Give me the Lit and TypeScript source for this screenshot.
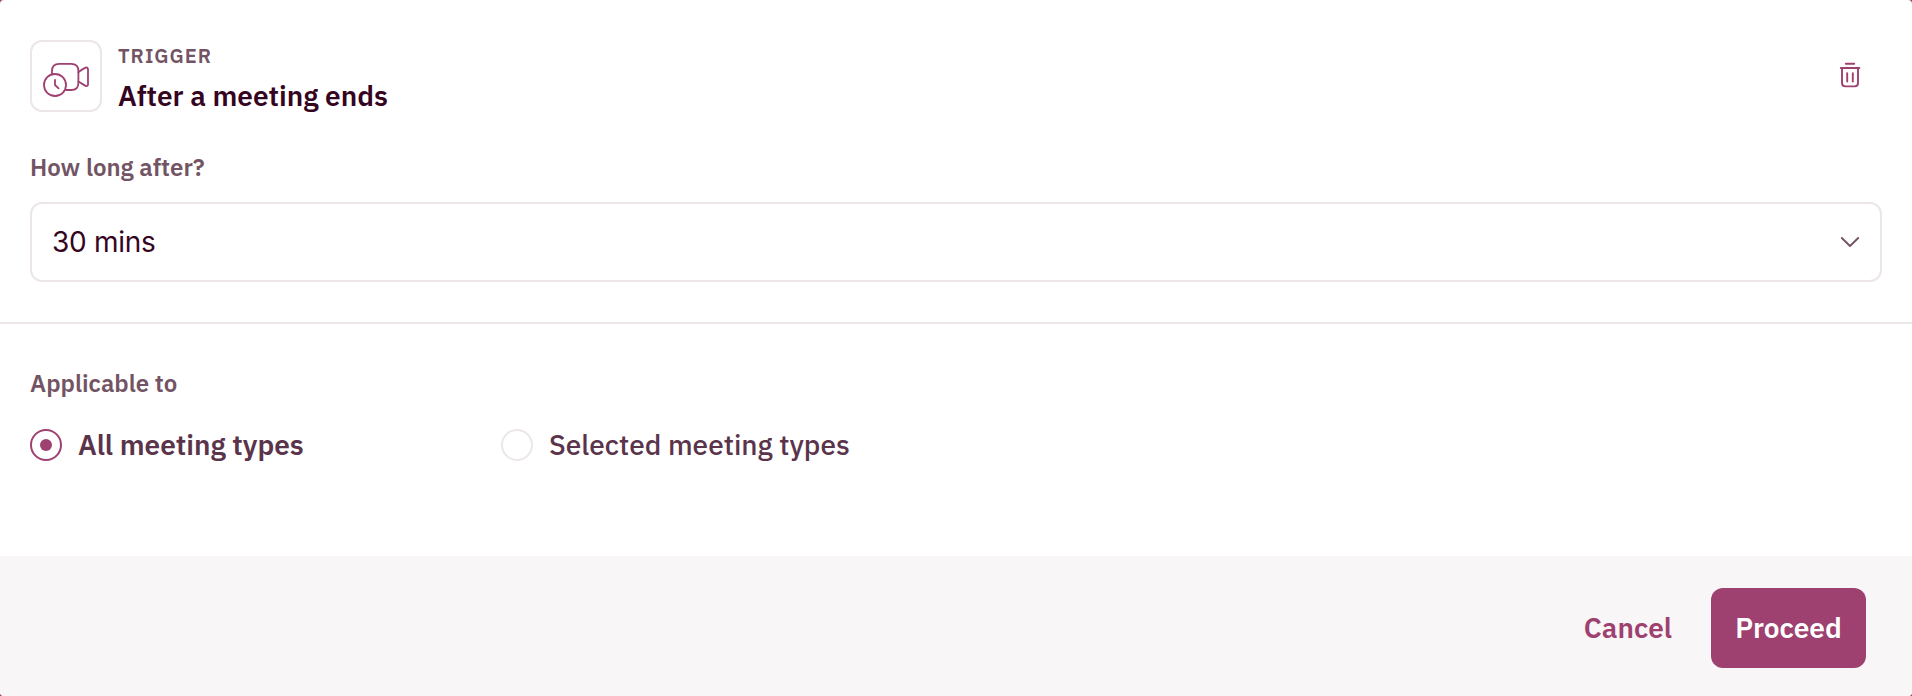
import { LitElement, html, css } from "lit";
import { customElement, state } from "lit/decorators.js";
import { classMap } from "lit/directives/class-map.js";

@customElement("app-root")
class AppRoot extends LitElement {
  static styles = css`
    :host {
      display: block;
      height: 696px;
      background: #9e4070;
      font-family: "IBM Plex Sans", "Open Sans", "Noto Sans", sans-serif;
    }
    * { box-sizing: border-box; }
    button { font: inherit; border: 0; background: none; padding: 0; margin: 0; }
    svg { display: block; fill: none; stroke: currentColor; stroke-linecap: round; stroke-linejoin: round; }
    .card {
      height: 100%;
      display: flex;
      flex-direction: column;
      background: #fff;
      border-radius: 4px;
      overflow: hidden;
    }
    .trigger { height: 324px; padding: 40px 30px 0; border-bottom: 2px solid #ece6e9; }
    .head { display: flex; align-items: flex-start; gap: 16px; height: 72px; }
    .tile { width: 72px; height: 72px; border: 2px solid #ece6e9; border-radius: 12px; color: #9e4070; }
    .titles { flex: 1; padding-top: 2px; display: flex; flex-direction: column; gap: 8px; white-space: nowrap; }
    .eyebrow { font-size: 20px; line-height: 27px; font-weight: 600; letter-spacing: 1px; color: #725464; }
    .title { font-size: 28px; line-height: 37px; font-weight: 600; color: #35051f; }
    .trash { color: #9e4070; margin: 21px 20px 0 0; }
    .label { font-size: 24px; line-height: 32px; font-weight: 600; color: #725464; }
    .label.duration { margin: 39px 0 19px; }
    .label.scope { margin-bottom: 30px; }
    .select {
      display: flex; align-items: center; justify-content: space-between;
      width: 100%; height: 80px; padding: 0 18px 0 20px;
      border: 2px solid #ece6e9; border-radius: 12px;
      font-family: Inter, sans-serif; font-size: 28px; letter-spacing: -0.3px; color: #35051f;
    }
    .select svg { color: #725464; }
    .applicable { flex: 1; padding: 43px 30px 0; }
    .options { display: grid; grid-template-columns: 471px auto; justify-content: start; }
    .option { display: flex; align-items: center; gap: 16px; height: 32px; color: #5a344a; white-space: nowrap; }
    .text { font-size: 28px; line-height: 37px; font-weight: 500; padding-bottom: 1px; }
    .on .text { font-weight: 600; }
    .radio { width: 32px; height: 32px; border: 2px solid #ece6e9; border-radius: 50%; display: grid; place-items: center; }
    .on .radio { border-color: #9e4070; }
    .on .radio::after { content: ""; width: 12px; height: 12px; border-radius: 50%; background: #9e4070; }
    .footer {
      height: 140px; padding: 32px 46px 0 0; background: #f8f6f7;
      display: flex; justify-content: flex-end; align-items: flex-start; gap: 39px;
      font-size: 28px; font-weight: 600; line-height: 37px;
    }
    .cancel { height: 80px; color: #9e4070; padding-bottom: 1px; }
    .proceed { width: 155px; height: 80px; border-radius: 12px; background: #9e4070; color: #fff; padding-bottom: 1px; }
  `;

  @state() private scope = "all";

  private option(id: string, text: string) {
    return html`<button class=${classMap({ option: true, on: this.scope === id })} @click=${() => (this.scope = id)}>
      <span class="radio"></span><span class="text">${text}</span>
    </button>`;
  }

  render() {
    return html`
      <div class="card">
        <section class="trigger">
          <div class="head">
            <div class="tile">
              <svg width="68" height="68" viewBox="0 0 68 68" stroke-width="1.8">
                <path d="M20 32V29Q20 21.8 27.2 21.8H39.2Q46.4 21.8 46.4 29V41Q46.4 48 39.2 48H34" />
                <path d="M46.4 30.2C48.5 28.8 51 26.8 53.6 25.7C55 25.1 56 25.8 56 27.2V42.2C56 43.8 55 44.5 53.6 43.9C51 42.8 48.5 40.8 46.4 39.5" />
                <circle cx="23" cy="43" r="11" />
                <path d="M23 38V43L26.6 46.4" />
              </svg>
            </div>
            <div class="titles">
              <div class="eyebrow">TRIGGER</div>
              <div class="title">After a meeting ends</div>
            </div>
            <button class="trash" aria-label="Delete">
              <svg width="24" height="28" viewBox="0 0 24 28" stroke-width="1.9">
                <path d="M7.8 2.7H16.2M2.8 7H21.4M4 7V22Q4 25.4 7.4 25.4H16.6Q20 25.4 20 22V7M9.2 12.2V20.6M14.8 12.2V20.6" />
              </svg>
            </button>
          </div>
          <div class="label duration">How long after?</div>
          <button class="select">
            <span>30 mins</span>
            <svg width="24" height="24" viewBox="0 0 24 24" stroke-width="1.9"><path d="M3.8 8L12 16L20.2 8" /></svg>
          </button>
        </section>
        <section class="applicable">
          <div class="label scope">Applicable to</div>
          <div class="options">
            ${this.option("all", "All meeting types")} ${this.option("selected", "Selected meeting types")}
          </div>
        </section>
        <footer class="footer">
          <button class="cancel">Cancel</button>
          <button class="proceed">Proceed</button>
        </footer>
      </div>
    `;
  }
}
